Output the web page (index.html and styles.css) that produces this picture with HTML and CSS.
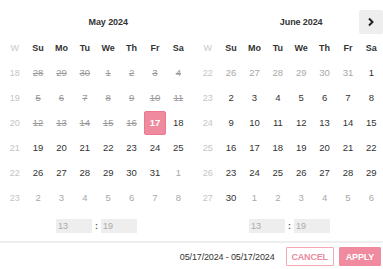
FILE: index.html
```html
<!DOCTYPE html>
<html lang="en">
<head>
  <meta charset="UTF-8">
  <title>Date Range Picker</title>
  <link rel="stylesheet" href="styles.css">
</head>
<body>
  <div class="picker">
    <div class="calendars">
      <div class="cal">
        <div class="cal-grid" id="grid-left">
          <div class="cal-title"><span></span><span class="month">May 2024</span><span></span></div>
        </div>
        <div class="time">
          <input class="time-input" type="text" value="13" disabled>
          <span class="colon">:</span>
          <input class="time-input" type="text" value="19" disabled>
        </div>
      </div>
      <div class="cal">
        <div class="cal-grid" id="grid-right">
          <div class="cal-title">
            <span></span><span class="month">June 2024</span>
            <button class="next" type="button">
              <svg width="8" height="10" viewBox="0 0 8 10"><path d="M2 1.5 L5.5 5 L2 8.5" fill="none" stroke="#222" stroke-width="2"/></svg>
            </button>
          </div>
        </div>
        <div class="time">
          <input class="time-input" type="text" value="13" disabled>
          <span class="colon">:</span>
          <input class="time-input" type="text" value="19" disabled>
        </div>
      </div>
    </div>
    <div class="footer">
      <span class="range">05/17/2024 - 05/17/2024</span>
      <button class="btn btn-cancel" type="button">CANCEL</button>
      <button class="btn btn-apply" type="button">APPLY</button>
    </div>
  </div>

  <script>
    var minDate = new Date(2024, 4, 17);
    var selected = new Date(2024, 4, 17);
    var days = ['Su', 'Mo', 'Tu', 'We', 'Th', 'Fr', 'Sa'];

    function buildMonth(gridId, year, month, firstWeek) {
      var grid = document.getElementById(gridId);
      var html = '<div class="dow wk">W</div>';
      days.forEach(function(d) { html += '<div class="dow">' + d + '</div>'; });

      var first = new Date(year, month, 1);
      var day = new Date(year, month, 1 - first.getDay());
      for (var w = 0; w < 6; w++) {
        html += '<div class="day wk">' + (firstWeek + w) + '</div>';
        for (var i = 0; i < 7; i++) {
          var cls = 'day';
          if (day < minDate) cls += ' off';
          else if (day.getMonth() !== month) cls += ' other';
          var label = day.getDate();
          if (day.getTime() === selected.getTime()) label = '<span class="sel">' + label + '</span>';
          html += '<div class="' + cls + '">' + label + '</div>';
          day.setDate(day.getDate() + 1);
        }
      }
      grid.insertAdjacentHTML('beforeend', html);
    }

    buildMonth('grid-left', 2024, 4, 18);
    buildMonth('grid-right', 2024, 5, 22);
  </script>
</body>
</html>
```

FILE: styles.css
```css
body { margin: 0; font-family: "Liberation Sans", Arial, sans-serif; font-size: 9px; color: #333; background: #fff; }
.picker { width: 383px; }
.calendars { display: flex; gap: 6px; padding-left: 3px; }
.cal { width: 187px; }
.cal-grid { display: grid; grid-template-columns: repeat(8, 1fr); grid-template-rows: 35px; grid-auto-rows: 25px; }
.cal-title { grid-column: 2 / 9; display: grid; grid-template-columns: 24px 1fr 24px; align-items: center; height: 24px; margin-top: 10px; }
.month { text-align: center; font-weight: bold; font-size: 9px; letter-spacing: -0.1px; }
.next { width: 24px; height: 24px; padding: 0; border: none; border-radius: 2px; background: #eeeeee; display: flex; align-items: center; justify-content: center; }
.dow, .day { display: flex; align-items: center; justify-content: center; }
.day { font-size: 9.5px; }
.dow { font-weight: bold; }
.dow.wk { font-weight: normal; color: #c8c8c8; }
.day.wk { color: #c4c4c4; font-size: 9px; }
.day.off { color: #999; text-decoration: line-through; }
.day.other { color: #a8a8a8; }
.sel { width: 22px; height: 24px; border-radius: 3px; background: #f08a9f; color: #fff; font-weight: bold; display: flex; align-items: center; justify-content: center; box-shadow: inset 0 0 0 1px #e9798f; }
.time { display: flex; justify-content: center; align-items: center; gap: 3px; margin-top: 9px; }
.time-input { width: 36px; height: 14px; box-sizing: border-box; border: none; background: #eeeeee; color: #aaa; font-family: inherit; font-size: 9px; padding: 0 2px; }
.colon { font-weight: bold; color: #555; width: 3px; text-align: center; }
.footer { display: flex; justify-content: flex-end; align-items: center; gap: 5px; margin-top: 8px; border-top: 2px solid #eeeeee; padding: 4px 2px 0 0; }
.range { margin-right: 6px; color: #333; letter-spacing: -0.15px; }
.btn { height: 19px; padding: 0 5px; font-family: inherit; font-size: 9px; font-weight: bold; border: 1px solid #f08a9f; border-radius: 1px; letter-spacing: -0.2px; cursor: pointer; }
.btn-cancel { background: #fff; color: #ec8aa0; border-color: #f2a6b6; }
.btn-apply { background: #f08a9f; color: #fff; padding: 0 6px; }
```
